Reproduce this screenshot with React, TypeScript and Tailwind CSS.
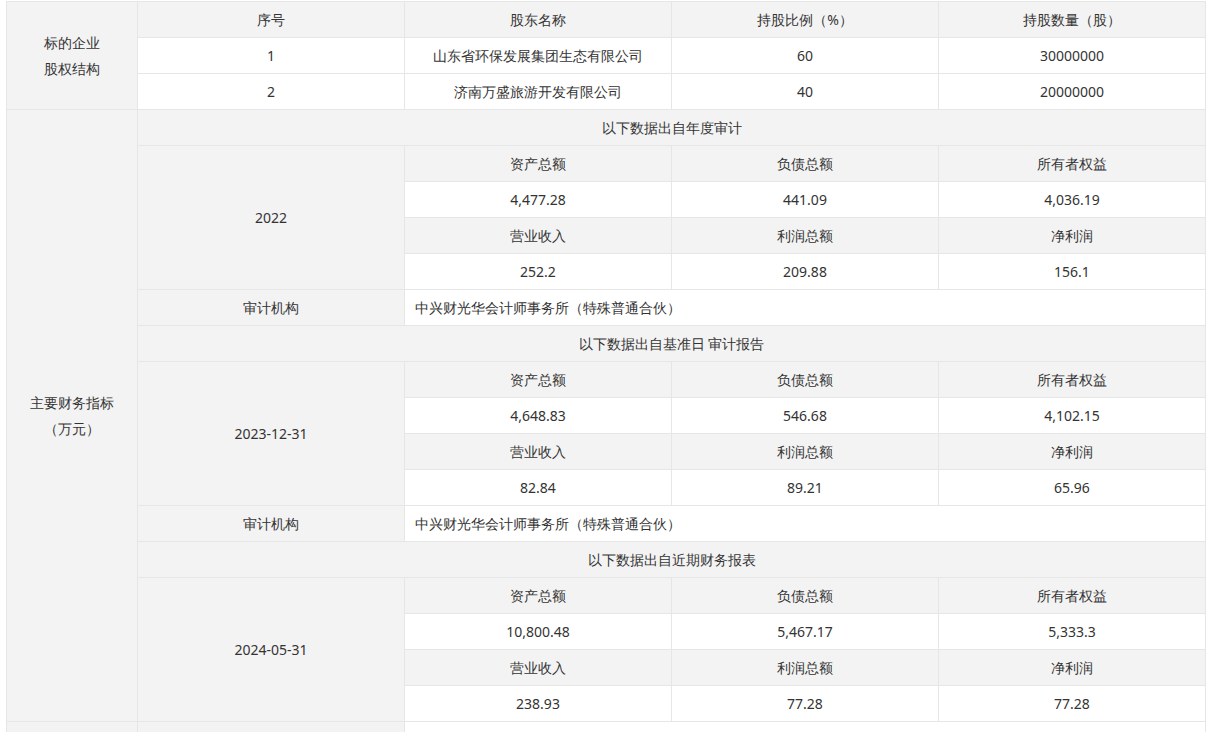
const F = "font-['Microsoft_YaHei','Noto_Sans_CJK_SC',sans-serif]";
const G = "bg-[#f3f3f3]";
const td = "border border-[#e6e6e6] h-[36px] text-center align-middle p-0";

const blocks = [
  { title: "以下数据出自年度审计", date: "2022", a: ["4,477.28", "441.09", "4,036.19"], b: ["252.2", "209.88", "156.1"], audit: true },
  { title: "以下数据出自基准日 审计报告", date: "2023-12-31", a: ["4,648.83", "546.68", "4,102.15"], b: ["82.84", "89.21", "65.96"], audit: true },
  { title: "以下数据出自近期财务报表", date: "2024-05-31", a: ["10,800.48", "5,467.17", "5,333.3"], b: ["238.93", "77.28", "77.28"], audit: false },
];

export default function App() {
  return (
    <div className={`bg-white w-[1211px] h-[732px] overflow-hidden pt-px pl-[6px] text-[14px] text-[#333] ${F}`}>
      <table className="table-fixed border-collapse w-[1199px]">
        <colgroup>
          <col className="w-[131px]" />
          <col className="w-[267px]" />
          <col className="w-[267px]" />
          <col className="w-[267px]" />
          <col className="w-[267px]" />
        </colgroup>
        <tbody>
          <tr>
            <td rowSpan={3} className={`${td} ${G} leading-[26px]`}>标的企业<br />股权结构</td>
            {["序号", "股东名称", "持股比例（%）", "持股数量（股）"].map((t) => (
              <td key={t} className={`${td} ${G}`}>{t}</td>
            ))}
          </tr>
          <tr>
            {["1", "山东省环保发展集团生态有限公司", "60", "30000000"].map((t, i) => (
              <td key={i} className={td}>{t}</td>
            ))}
          </tr>
          <tr>
            {["2", "济南万盛旅游开发有限公司", "40", "20000000"].map((t, i) => (
              <td key={i} className={td}>{t}</td>
            ))}
          </tr>
          {blocks.map((bl, bi) => (
            <BlockRows key={bi} bl={bl} first={bi === 0} />
          ))}
          <tr>
            <td className={`${td} ${G}`}></td>
            <td className={`${td} ${G}`}></td>
            <td colSpan={3} className={td}></td>
          </tr>
        </tbody>
      </table>
    </div>
  );
}

function BlockRows({ bl, first }: { bl: (typeof blocks)[number]; first: boolean }) {
  return (
    <>
      <tr>
        {first && (
          <td rowSpan={17} className={`${td} ${G} leading-[26px]`}>主要财务指标<br />（万元）</td>
        )}
        <td colSpan={4} className={`${td} ${G}`}>{bl.title}</td>
      </tr>
      <tr>
        <td rowSpan={4} className={`${td} ${G}`}>{bl.date}</td>
        {["资产总额", "负债总额", "所有者权益"].map((t) => (
          <td key={t} className={`${td} ${G}`}>{t}</td>
        ))}
      </tr>
      <tr>{bl.a.map((t, i) => <td key={i} className={td}>{t}</td>)}</tr>
      <tr>
        {["营业收入", "利润总额", "净利润"].map((t) => (
          <td key={t} className={`${td} ${G}`}>{t}</td>
        ))}
      </tr>
      <tr>{bl.b.map((t, i) => <td key={i} className={td}>{t}</td>)}</tr>
      {bl.audit && (
        <tr>
          <td className={`${td} ${G}`}>审计机构</td>
          <td colSpan={3} className={`${td} !text-left !pl-[10px]`}>中兴财光华会计师事务所（特殊普通合伙）</td>
        </tr>
      )}
    </>
  );
}
